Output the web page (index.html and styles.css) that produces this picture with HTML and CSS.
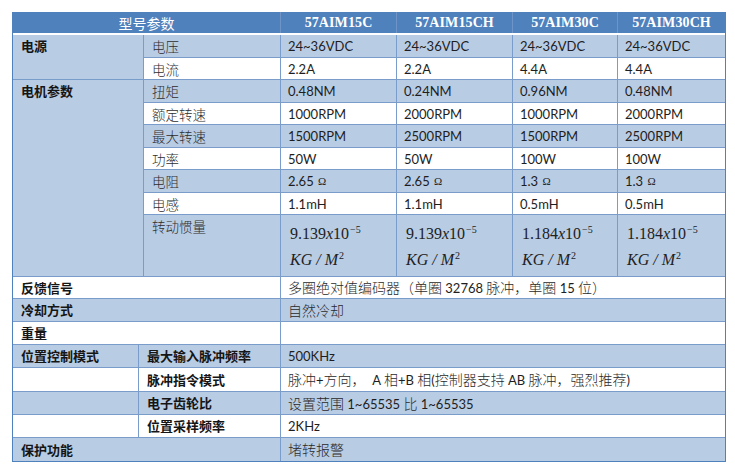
FILE: index.html
```html
<!DOCTYPE html>
<html lang="zh">
<head>
<meta charset="utf-8">
<title>57AIM 参数</title>
<link rel="stylesheet" href="styles.css">
</head>
<body>
<div class="sheet">
  <div class="head">
    <div class="hc title span2">型号参数</div>
    <div class="hc model">57AIM15C</div>
    <div class="hc model">57AIM15CH</div>
    <div class="hc model">57AIM30C</div>
    <div class="hc model">57AIM30CH</div>
  </div>

  <div class="grid top">
    <div class="c L lbl top-al rows2">电源</div>
    <div class="c L sub">电压</div>
    <div class="c L v">24~36VDC</div>
    <div class="c L v">24~36VDC</div>
    <div class="c L v">24~36VDC</div>
    <div class="c L v">24~36VDC</div>

    <div class="c W sub">电流</div>
    <div class="c W v">2.2A</div>
    <div class="c W v">2.2A</div>
    <div class="c W v">4.4A</div>
    <div class="c W v">4.4A</div>

    <div class="c L lbl top-al rows7">电机参数</div>
    <div class="c L sub">扭矩</div>
    <div class="c L v">0.48NM</div>
    <div class="c L v">0.24NM</div>
    <div class="c L v">0.96NM</div>
    <div class="c L v">0.48NM</div>

    <div class="c W sub">额定转速</div>
    <div class="c W v">1000RPM</div>
    <div class="c W v">2000RPM</div>
    <div class="c W v">1000RPM</div>
    <div class="c W v">2000RPM</div>

    <div class="c L sub">最大转速</div>
    <div class="c L v">1500RPM</div>
    <div class="c L v">2500RPM</div>
    <div class="c L v">1500RPM</div>
    <div class="c L v">2500RPM</div>

    <div class="c W sub">功率</div>
    <div class="c W v">50W</div>
    <div class="c W v">50W</div>
    <div class="c W v">100W</div>
    <div class="c W v">100W</div>

    <div class="c L sub">电阻</div>
    <div class="c L v"><span class="t">2.65 <span class="ohm">Ω</span></span></div>
    <div class="c L v"><span class="t">2.65 <span class="ohm">Ω</span></span></div>
    <div class="c L v"><span class="t">1.3 <span class="ohm">Ω</span></span></div>
    <div class="c L v"><span class="t">1.3 <span class="ohm">Ω</span></span></div>

    <div class="c W sub">电感</div>
    <div class="c W v">1.1mH</div>
    <div class="c W v">1.1mH</div>
    <div class="c W v">0.5mH</div>
    <div class="c W v">0.5mH</div>

    <div class="c L sub top-al">转动惯量</div>
    <div class="c L math"><span class="ml">9.139<i>x</i>10<sup>−5</sup></span><span class="ml"><i>KG</i> <i>/</i> <i>M</i><sup>2</sup></span></div>
    <div class="c L math"><span class="ml">9.139<i>x</i>10<sup>−5</sup></span><span class="ml"><i>KG</i> <i>/</i> <i>M</i><sup>2</sup></span></div>
    <div class="c L math"><span class="ml">1.184<i>x</i>10<sup>−5</sup></span><span class="ml"><i>KG</i> <i>/</i> <i>M</i><sup>2</sup></span></div>
    <div class="c L math"><span class="ml">1.184<i>x</i>10<sup>−5</sup></span><span class="ml"><i>KG</i> <i>/</i> <i>M</i><sup>2</sup></span></div>

    <div class="c W lbl span2">反馈信号</div>
    <div class="c W v span4"><span class="t"><span class="zh">多圈绝对值编码器（单圈</span> 32768 <span class="zh">脉冲，单圈</span> 15 <span class="zh">位）</span></span></div>

    <div class="c L lbl span2">冷却方式</div>
    <div class="c L v span4"><span class="t"><span class="zh">自然冷却</span></span></div>

    <div class="c W lbl span2">重量</div>
    <div class="c W v span4"></div>
  </div>

  <div class="grid bottom">
    <div class="c L lbl">位置控制模式</div>
    <div class="c L lbl">最大输入脉冲频率</div>
    <div class="c L v">500KHz</div>

    <div class="c W"></div>
    <div class="c W lbl">脉冲指令模式</div>
    <div class="c W v"><span class="t pre"><span class="zh">脉冲</span>+<span class="zh">方向，</span>  A <span class="zh">相</span>+B <span class="zh">相</span>(<span class="zh">控制器支持</span> AB <span class="zh">脉冲，强烈推荐</span>)</span></div>

    <div class="c L"></div>
    <div class="c L lbl">电子齿轮比</div>
    <div class="c L v"><span class="t"><span class="zh">设置范围</span> 1~65535 <span class="zh">比</span> 1~65535</span></div>

    <div class="c W"></div>
    <div class="c W lbl">位置采样频率</div>
    <div class="c W v">2KHz</div>

    <div class="c L lbl span2">保护功能</div>
    <div class="c L v"><span class="t"><span class="zh">堵转报警</span></span></div>
  </div>
</div>
</body>
</html>
```

FILE: styles.css
```css
html, body {
  margin: 0;
  background: #ffffff;
}

body {
  padding: 12px;
  font-family: "Noto Sans CJK SC", sans-serif;
}

.sheet {
  width: 712px;
  display: flex;
  flex-direction: column;
  background: #7a9ccb;
  border-left: 1px solid #4f81bd;
  border-right: 1px solid #4f81bd;
  border-bottom: 1px solid #4f81bd;
}

.head {
  display: grid;
  grid-template-columns: 130px 136px 115px 115px 104px 107px;
  column-gap: 1px;
  height: 21px;
  background: #6f95c8;
  border-bottom: 2px solid #ffffff;
}

.hc {
  background: #4f81bd;
  color: #ffffff;
  display: flex;
  align-items: center;
  justify-content: center;
}

.title {
  font-family: "Noto Sans CJK SC", sans-serif;
  font-size: 14px;
  font-weight: 400;
}

.model {
  font-family: "Liberation Serif", "DejaVu Serif", serif;
  font-weight: 700;
  font-size: 14px;
  letter-spacing: 0.1px;
}

.grid {
  display: grid;
  gap: 1px;
  background: #7a9ccb;
}

.top {
  grid-template-columns: 130px 136px 115px 115px 104px 107px;
  grid-template-rows: 22px 21px 22px 21px 22px 21px 22px 21px 61px 21px 22px 22px;
}

.bottom {
  margin-top: 1px;
  grid-template-columns: 125px 141px 444px;
  grid-template-rows: 22px 23px 22px 22px 23px;
}

.c {
  display: flex;
  align-items: center;
  padding: 0 7px;
  min-width: 0;
  white-space: nowrap;
  overflow: hidden;
  line-height: 20px;
}

.L { background: #b8cce4; }
.W { background: #ffffff; }

.span2 { grid-column: span 2; }
.span4 { grid-column: span 4; }
.rows2 { grid-row: span 2; }
.rows7 { grid-row: span 7; }

.top-al {
  align-items: flex-start;
  padding-top: 1px;
}

.lbl {
  font-family: "Noto Sans CJK SC", sans-serif;
  font-weight: 700;
  font-size: 13px;
  color: #151515;
  padding-left: 8px;
}

.sub {
  font-family: "Noto Sans CJK SC", sans-serif;
  font-weight: 300;
  font-size: 13.5px;
  color: #2e2e2e;
  padding-left: 8px;
}

.v {
  font-family: Lato, "Noto Sans CJK SC", sans-serif;
  font-size: 13px;
  color: #1e1e1e;
}

.t { display: block; }

.v .zh {
  font-family: "Noto Sans CJK SC", sans-serif;
  font-weight: 300;
  font-size: 14px;
  color: #2a2a2a;
}

.pre { white-space: pre; }

.ohm {
  font-family: "Liberation Serif", serif;
  font-size: 11px;
  margin-left: 1px;
  position: relative;
  top: -1px;
}

.math {
  flex-direction: column;
  align-items: flex-start;
  justify-content: flex-start;
  padding: 7px 8px 0 9px;
  font-family: "Liberation Serif", "DejaVu Serif", serif;
  font-size: 16px;
  color: #222222;
}

.ml {
  display: block;
  line-height: 24px;
}

.math sup {
  font-size: 10px;
  vertical-align: 0;
  position: relative;
  top: -6px;
  margin-left: 1px;
}
```
